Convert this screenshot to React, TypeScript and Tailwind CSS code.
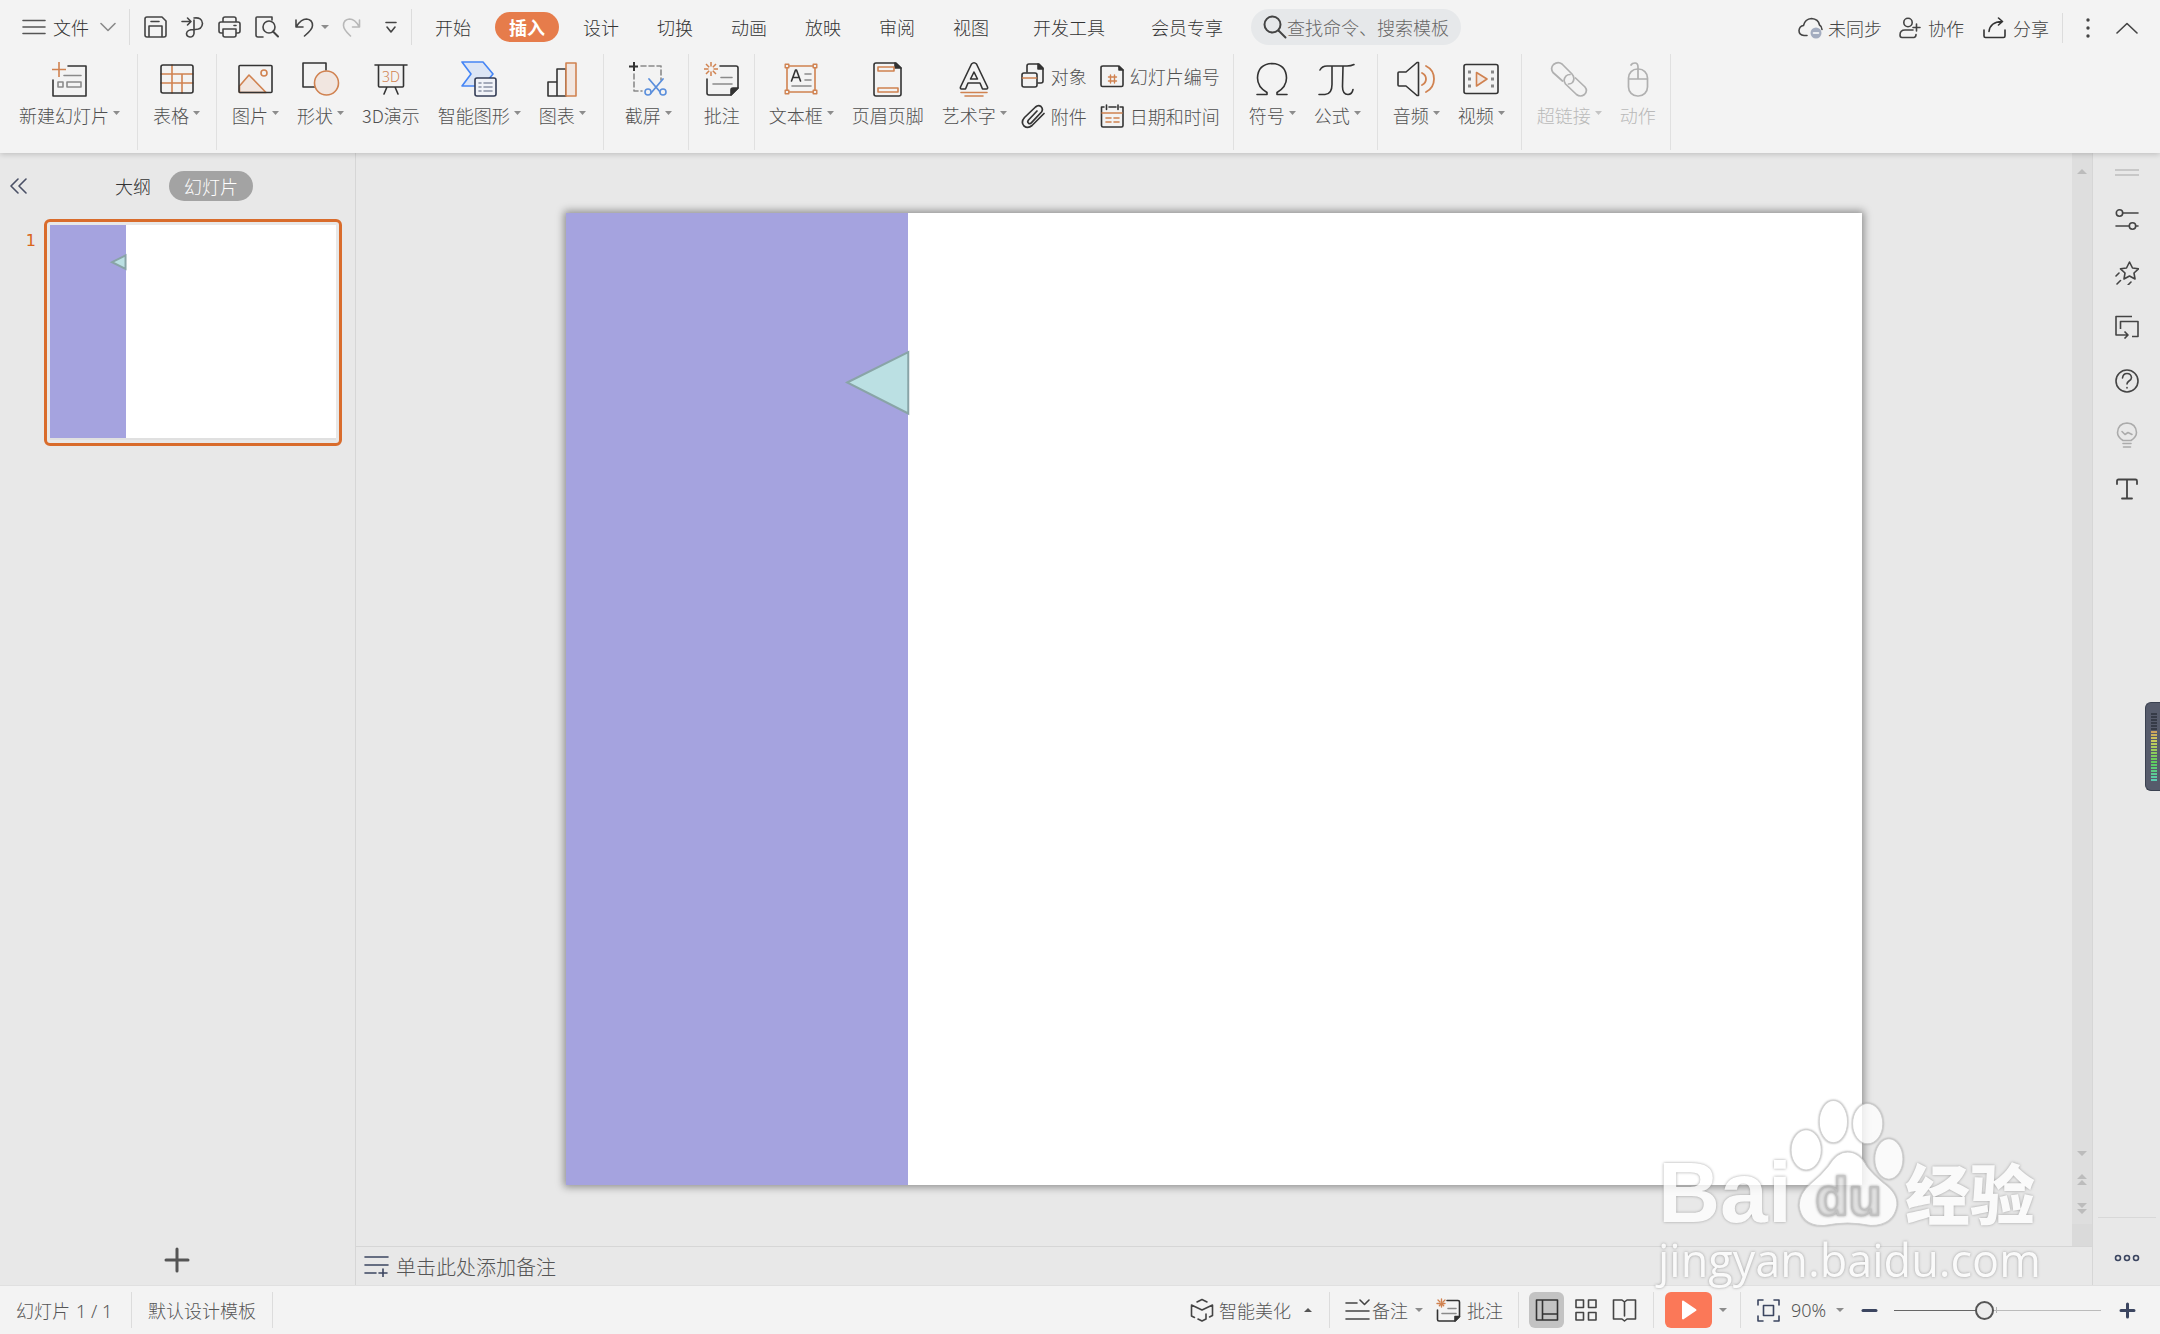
import React from "react";

type IconProps = { w: number; h: number; color?: string; sw?: number; children: React.ReactNode };

const Icon = ({ w, h, color = "#333333", sw = 1.6, children }: IconProps) => (
  <svg width={w} height={h} viewBox={`0 0 ${w} ${h}`} fill="none" stroke={color} strokeWidth={sw} strokeLinejoin="round" strokeLinecap="round" className="shrink-0" aria-hidden="true">
    {children}
  </svg>
);

const OR = "#d08250";
const ORF = "#f1e6e0";

const Caret = ({ color = "#8c8c8c" }: { color?: string }) => (
  <svg width="7" height="10" viewBox="0 0 7 10" className="shrink-0" aria-hidden="true">
    <path d="M0 1h7L3.5 5z" fill={color} />
  </svg>
);

const MidCaret = ({ up = false }: { up?: boolean }) => (
  <svg width="8" height="4" viewBox="0 0 8 4" className="shrink-0" aria-hidden="true">
    <path d={up ? "M0 4h8L4 0z" : "M0 0h8L4 4z"} fill={up ? "#555" : "#8c8c8c"} />
  </svg>
);

const icons = {
  newSlide: (
    <Icon w={35} h={36}>
      <path d="M16 5h18v30H1V19" />
      <path d="M7 1v15M0 8.500h14" stroke={OR} strokeLinecap="butt" />
      <path d="M12 14.500h17M6 21h5v5H6zM15 21h14v5H15z" stroke="#8a8a8a" />
    </Icon>
  ),
  table: (
    <Icon w={34} h={30}>
      <path d="M1 10h32M1 19h32M12 1v28M22 10v19" stroke={OR} />
      <rect x="1" y="1" width="32" height="28" rx="2" />
    </Icon>
  ),
  picture: (
    <Icon w={35} h={30}>
      <path d="M1.500 22L11 11l17 17.500H1.500z" fill={ORF} stroke={OR} />
      <circle cx="26" cy="9" r="3" stroke={OR} />
      <rect x="1" y="1.500" width="33" height="27" rx="1" />
    </Icon>
  ),
  shape: (
    <Icon w={38} h={36}>
      <path d="M24 9V2H1v24h12" />
      <circle cx="24.500" cy="22" r="12" fill={ORF} stroke={OR} />
    </Icon>
  ),
  demo3d: (
    <Icon w={34} h={34}>
      <path d="M1 3h32M4.500 3v21q0 1 1 1h23q1 0 1-1V3M13 25l-3 7M21 25l3 7" />
      <text x="17" y="20" textAnchor="middle" fontSize="14" fontFamily="Noto Sans" fill={OR} stroke="none">3D</text>
    </Icon>
  ),
  smart: (
    <Icon w={37} h={36}>
      <path d="M1 1h21l10 12-10 12H1l9-12z" fill="#dce5f5" stroke="#4585f5" />
      <rect x="14" y="17" width="21" height="18" rx="2" fill="#f1f3f8" stroke="#333c55" />
      <path d="M18 22h2M23 22h8M18 26h2M23 26h8M18 30h2M23 30h8" stroke="#8a92a5" />
    </Icon>
  ),
  chart: (
    <Icon w={30} h={36}>
      <path d="M1 21h9v14H1zM10 8h9v27h-9z" />
      <path d="M19 2h10v33H19z" fill={ORF} stroke={OR} />
    </Icon>
  ),
  capture: (
    <Icon w={38} h={36}>
      <path d="M12 5h20v14M5 13v17h8" stroke="#8a8a8a" strokeDasharray="5 3" />
      <path d="M5 1v9M0 5.500h9" strokeLinecap="butt" strokeWidth="2" />
      <path d="M20 18l12 14M34 18L22 32" stroke="#5b8fdc" strokeWidth="1.800" />
      <circle cx="19" cy="31" r="3" stroke="#5b8fdc" fill="#f3f3f3" />
      <circle cx="34" cy="31" r="3" stroke="#5b8fdc" fill="#f3f3f3" />
    </Icon>
  ),
  comment: (
    <Icon w={36} h={36}>
      <path d="M16 5h16q2 0 2 2v20l-7 7H5q-2 0-2-2V18" />
      <path d="M34 27v0l-7 7v-5q0-2 2-2z" fill="#333" />
      <path d="M7 1v4.500M7 10.500v4.500M0 8h4.500M9.500 8H14M2 3l3.200 3.200M8.800 9.800L12 13M12 3L8.800 6.200M5.200 9.800L2 13" stroke={OR} strokeWidth="1.500" strokeLinecap="butt" />
      <path d="M17 16.500h11M9 23h19" stroke="#8a8a8a" />
    </Icon>
  ),
  textbox: (
    <Icon w={34} h={32}>
      <path d="M3 3h28v26H3z" stroke={OR} />
      <path d="M1.200 1.200h3.600v3.600H1.200zM29.200 1.200h3.600v3.600h-3.600zM1.200 27.200h3.600v3.600H1.200zM29.200 27.200h3.600v3.600h-3.600z" fill="#f3f3f3" stroke={OR} strokeWidth="1.400" />
      <path d="M7.500 18l4-11h1l4 11M9 14.500h6" />
      <path d="M21 11h6M21 17h6M8 23h19" stroke="#8a8a8a" />
    </Icon>
  ),
  header: (
    <Icon w={30} h={36}>
      <path d="M3 2h20l5 5v26q0 2-2 2H3q-2 0-2-2V4q0-2 2-2z" />
      <path d="M22 2v5h6z" fill="#333" />
      <path d="M5 6h16v4H5zM5 27h20v4H5z" stroke={OR} />
    </Icon>
  ),
  wordart: (
    <Icon w={32} h={36}>
      <path d="M13.500 3q2.500-2.500 5 0l11 23q.5 2-1 2h-4l-2.500-6H10l-2.500 6h-4q-1.500 0-1-2zM16 11l-3.500 7h7z" />
      <path d="M3 31.500h26M7 35h18" stroke={OR} />
    </Icon>
  ),
  object: (
    <Icon w={24} h={26}>
      <path d="M6 9V3q0-2 2-2h10l4 4v13q0 2-2 2h-3" />
      <path d="M17 1l5 5h-5z" fill="#333" />
      <rect x="1" y="10" width="15" height="14" rx="2" fill="#f3f3f3" />
      <path d="M1.500 15h14" stroke={OR} />
    </Icon>
  ),
  attach: (
    <Icon w={24} h={26} sw={1.7}>
      <path d="M16 8L7.500 17q-1.500 2 0 3.200 1.500 1 3-.5L20.500 9q2-3-.5-5.500-2.700-2-5.500.5L3.500 14.500q-4 4.500-.5 8.500 4 3 8-.5L23 10.500" />
    </Icon>
  ),
  number: (
    <Icon w={24} h={24}>
      <path d="M3 2h15l5 4v15q0 1.500-1.500 1.500h-19Q1 22.500 1 21V3.500Q1 2 3 2z" />
      <path d="M19 2l4 4h-4z" fill="#333" />
      <path d="M10.500 11v8M14.500 11v8M8.500 13h8M8.500 17h8" stroke={OR} strokeWidth="1.400" />
    </Icon>
  ),
  date: (
    <Icon w={24} h={24}>
      <path d="M4 3H1.500v18.500q0 1.500 1.500 1.500h18.500q1.500 0 1.500-1.500V3h-3M9 3h7M6.500 1v4.500M18 1v4.500" />
      <path d="M2 9h20M6 14h5M14 14h5M6 18h5M14 18h5" stroke={OR} />
    </Icon>
  ),
  omega: (
    <Icon w={32} h={34}>
      <path d="M1 32.500h10v-2Q1.500 25 1.500 16 2 2 16 1.500 30 2 30.500 16q0 9-9.500 14.500v2h10" />
    </Icon>
  ),
  pi: (
    <Icon w={38} h={34}>
      <path d="M2 8q2-4 7-4h20q4 0 7-1.500M14 4.500v18q0 9.500-7 10H1M25 4.500l-.5 20q0 8 5.500 8 4 0 5-5" />
    </Icon>
  ),
  audio: (
    <Icon w={38} h={36}>
      <path d="M2 11h7L20 1.500h1.500v33H20L9 25H2q-1 0-1-1V12q0-1 1-1z" />
      <path d="M25 12q4 2 4 6t-4 6M29 5q8 4 8 13t-8 13" stroke={OR} strokeWidth="1.800" />
    </Icon>
  ),
  video: (
    <Icon w={36} h={32}>
      <rect x="1" y="1.500" width="34" height="29" rx="2" />
      <path d="M13.500 9.500L24 16l-10.500 7z" fill={ORF} stroke={OR} />
      <path d="M5 9h3M5 16h3M5 23h3M28 9h3M28 16h3M28 23h3" stroke="#888" strokeWidth="3" strokeLinecap="butt" />
    </Icon>
  ),
  link: (
    <Icon w={38} h={36} color="#b0b0b0" sw={1.7}>
      <path d="M12.500 20L3 11.500Q0 7 3.500 3.500 8 0 12 3l10 10q3.500 4 .5 8.500-1.500 1.500-4 1.500" />
      <path d="M25.500 17L35 26q3 4-.5 7.500-4 3-8 0L15.500 23q-3-4 .5-8 1.500-1.500 4-1.500" />
    </Icon>
  ),
  mouse: (
    <Icon w={24} h={36} color="#b0b0b0" sw={1.7}>
      <rect x="2.500" y="8" width="19" height="27" rx="9" />
      <path d="M3 18h18M12 18V6q0-4-3-4-3 0-4 2" />
    </Icon>
  ),
};

type RibbonItem = { icon: React.ReactNode; label: string; caret?: boolean; off?: boolean };

const RibbonButton = ({ icon, label, caret, off }: RibbonItem) => (
  <button type="button" disabled={off} className={`flex shrink-0 flex-col items-center px-[9px] ${off ? "text-[#b9b9b9]" : "text-[#505050]"}`}>
    <span className="flex h-9 items-center">{icon}</span>
    <span className="mt-1 flex h-7 items-center gap-1 text-lg leading-7 whitespace-nowrap">
      {label}
      {caret && <Caret color={off ? "#c4c4c4" : "#8c8c8c"} />}
    </span>
  </button>
);

const Group = ({ items, pad = "pl-[6px] pr-[7px]", children }: { items: RibbonItem[]; pad?: string; children?: React.ReactNode }) => (
  <div className={`flex h-24 shrink-0 items-start border-r border-[#e0e0e0] pt-[7px] ${pad}`}>
    {items.map((it) => (
      <RibbonButton key={it.label} {...it} />
    ))}
    {children}
  </div>
);

const SmallButton = ({ icon, label }: { icon: React.ReactNode; label: string }) => (
  <button type="button" className="flex h-10 items-center gap-[6px] text-lg whitespace-nowrap text-[#505050]">
    {icon}
    {label}
  </button>
);

const Tool = ({ label, className, children }: { label: string; className?: string; children: React.ReactNode }) => (
  <button type="button" aria-label={label} className={`flex shrink-0 items-center justify-center ${className ?? ""}`}>
    {children}
  </button>
);

const TopBar = () => (
  <div className="flex h-[54px] items-center pr-[22px] pl-[22px] text-lg whitespace-nowrap text-[#333]">
    <button type="button" className="flex items-center">
      <Icon w={24} h={16} color="#555">
        <path d="M1 1.500h22M1 8h22M1 14.500h22" />
      </Icon>
      <span className="ml-[7px]">文件</span>
      <span className="ml-[11px]">
        <Icon w={16} h={10} color="#8a8a8a"><path d="M1 1.500l7 7 7-7" /></Icon>
      </span>
    </button>
    <span className="ml-[13px] h-9 w-px bg-[#dcdcdc]" />
    <div className="ml-[14px] flex items-center gap-[14px]">
      <Tool label="保存">
        <Icon w={23} h={22} color="#444">
          <path d="M3 1h15l4 4v14q0 2-2 2H3q-2 0-2-2V3q0-2 2-2zM5 21v-11h13v11M7 5.500h8" />
        </Icon>
      </Tool>
      <Tool label="输出为PDF">
        <Icon w={23} h={22} color="#444">
          <path d="M1 5.500h8M6.500 2l3.500 3.500L6.500 9M13 2q8-1 8.500 5.500Q21 14 13 13.500V4M13 13.500v4q-.5 3.500-4 3.500-3.500-.5-3.500-3.500.5-4 7.500-4" />
        </Icon>
      </Tool>
      <Tool label="打印">
        <Icon w={23} h={22} color="#444">
          <path d="M5 6V3q0-2 2-2h9q2 0 2 2v3M5 17H3q-2 0-2-2V8q0-2 2-2h17q2 0 2 2v7q0 2-2 2h-2M5 13h13v6q0 2-2 2H7q-2 0-2-2zM16 9.500h2" />
        </Icon>
      </Tool>
      <Tool label="打印预览">
        <Icon w={24} h={22} color="#444">
          <path d="M17 4V1H2Q1 1 1 2v17q0 2 2 2h5" />
          <circle cx="14" cy="11" r="6" />
          <path d="M18 15.500l5 5" strokeWidth="2" />
        </Icon>
      </Tool>
    </div>
    <div className="ml-[15px] flex items-center">
      <Tool label="撤销">
        <Icon w={20} h={20} color="#444"><path d="M2 3v7h7M2.500 9.500Q7 2 12.500 2q6 .5 6 6.500 0 4-8 10.500" /></Icon>
      </Tool>
      <Tool label="撤销列表" className="ml-[7px]"><MidCaret /></Tool>
      <Tool label="恢复" className="ml-[13px]">
        <Icon w={19} h={20} color="#b8b8b8"><path d="M17.500 3v7h-7M17 9.500Q13 2 7.500 2 1.500 2.500 1.500 8.500q0 4 7 10.500" /></Icon>
      </Tool>
      <Tool label="自定义快速访问工具栏" className="ml-6">
        <Icon w={12} h={13} color="#444"><path d="M1 1.500h10M2 6l4 5 4-5" /></Icon>
      </Tool>
    </div>
    <span className="ml-[14px] h-9 w-px bg-[#dcdcdc]" />
    <nav className="ml-[9px] flex items-center gap-[10px]">
      {["开始", "插入", "设计", "切换", "动画", "放映", "审阅", "视图"].map((t) => (
        <button key={t} type="button" className={t === "插入" ? "h-[30px] w-16 rounded-full bg-[#e67c4b] font-bold text-white" : "h-[30px] w-16"}>
          {t}
        </button>
      ))}
      <button type="button" className="ml-4 h-[30px] px-1">开发工具</button>
      <button type="button" className="ml-7 h-[30px] px-1">会员专享</button>
    </nav>
    <label className="ml-6 flex h-9 w-[210px] shrink-0 items-center rounded-full bg-[#e6e8ea] pl-3">
      <Icon w={24} h={24} color="#444" sw={2}>
        <circle cx="9.500" cy="9.500" r="8" />
        <path d="M15.500 15.500l7 7" />
      </Icon>
      <input aria-label="查找命令、搜索模板" placeholder="查找命令、搜索模板" className="min-w-0 flex-1 bg-transparent outline-none placeholder:text-[#666]" />
    </label>
    <div className="ml-auto flex items-center pt-px text-[#444]">
      <button type="button" className="flex items-center gap-[5px]">
        <Icon w={25} h={22} color="#444">
          <path d="M9 18.500H6Q1 18 1 13.500 1.500 9 5.500 8.500 7 2 13.500 1.500q7 .5 8 6.500 2.500 1.500 2.500 4.500" />
          <circle cx="18" cy="16" r="5.500" fill="#a3acbf" stroke="none" />
          <path d="M15.500 16h5" stroke="#fff" />
        </Icon>
        未同步
      </button>
      <button type="button" className="ml-[17px] flex items-center gap-[7px]">
        <Icon w={22} h={22} color="#444">
          <circle cx="9" cy="5.500" r="4.200" />
          <path d="M14 13H6q-5 0-5 5 0 2.500 2 2.500h12q2-.5 2-3M14 10.500h7M17.500 7v7" />
        </Icon>
        协作
      </button>
      <button type="button" className="ml-[19px] flex items-center gap-[7px]">
        <Icon w={23} h={22} color="#333">
          <path d="M1 13v6q0 1.500 1.500 1.500h18q1.500 0 1.500-1.500v-6M6 14.500Q7 5 19 4.500M15.500 1l4 3.500-4 3.500" />
        </Icon>
        分享
      </button>
      <span className="ml-[13px] h-[30px] w-px bg-[#dcdcdc]" />
      <Tool label="更多" className="ml-[23px]">
        <svg width="4" height="20" viewBox="0 0 4 20" fill="#444" aria-hidden="true"><circle cx="2" cy="2" r="1.700" /><circle cx="2" cy="10" r="1.700" /><circle cx="2" cy="18" r="1.700" /></svg>
      </Tool>
      <Tool label="收起功能区" className="ml-[26px]">
        <Icon w={22} h={12} color="#444"><path d="M1 11L11 1.500 21 11" /></Icon>
      </Tool>
    </div>
  </div>
);

const Ribbon = () => (
  <div className="flex h-[99px] items-start overflow-hidden">
    <Group pad="pl-[10px] pr-2" items={[{ icon: icons.newSlide, label: "新建幻灯片", caret: true }]} />
    <Group items={[{ icon: icons.table, label: "表格", caret: true }]} />
    <Group
      pad="pl-[6px] pr-2"
      items={[
        { icon: icons.picture, label: "图片", caret: true },
        { icon: icons.shape, label: "形状", caret: true },
        { icon: icons.demo3d, label: "3D演示" },
        { icon: icons.smart, label: "智能图形", caret: true },
        { icon: icons.chart, label: "图表", caret: true },
      ]}
    />
    <Group pad="pl-3 pr-[7px]" items={[{ icon: icons.capture, label: "截屏", caret: true }]} />
    <Group pad="pl-[6px] pr-[5px]" items={[{ icon: icons.comment, label: "批注" }]} />
    <Group
      pad="pl-[5px] pr-[7px]"
      items={[
        { icon: icons.textbox, label: "文本框", caret: true },
        { icon: icons.header, label: "页眉页脚" },
        { icon: icons.wordart, label: "艺术字", caret: true },
      ]}
    >
      <div className="-mt-[5px] grid grid-cols-[auto_auto] gap-x-[13px] pr-[6px] pl-[5px]">
        <SmallButton icon={icons.object} label="对象" />
        <SmallButton icon={icons.number} label="幻灯片编号" />
        <SmallButton icon={icons.attach} label="附件" />
        <SmallButton icon={icons.date} label="日期和时间" />
      </div>
    </Group>
    <Group items={[{ icon: icons.omega, label: "符号", caret: true }, { icon: icons.pi, label: "公式", caret: true }]} />
    <Group items={[{ icon: icons.audio, label: "音频", caret: true }, { icon: icons.video, label: "视频", caret: true }]} />
    <Group pad="pl-[6px] pr-[5px]" items={[{ icon: icons.link, label: "超链接", caret: true, off: true }, { icon: icons.mouse, label: "动作", off: true }]} />
  </div>
);

const SlideArt = () => (
  <div className="relative size-full bg-white">
    <div className="h-full w-[26.4%] bg-[#a5a3df]" />
    <svg viewBox="0 0 1295 972" preserveAspectRatio="none" className="absolute inset-0 size-full" aria-hidden="true">
      <path d="M281 169.500L342 139v61.500z" fill="#bbe0e3" stroke="#89a4a7" strokeWidth="2" vectorEffect="non-scaling-stroke" />
    </svg>
  </div>
);

const Sidebar = () => (
  <aside className="flex w-[356px] shrink-0 flex-col border-r border-[#d6d6d6] pt-[18px]">
    <div className="flex h-[30px] items-center pl-[9px] text-lg text-[#333]">
      <Tool label="收起面板">
        <Icon w={19} h={16} color="#4a5066"><path d="M9 1L2 8l7 7M17 1l-7 7 7 7" /></Icon>
      </Tool>
      <button type="button" className="ml-[87px]">大纲</button>
      <button type="button" className="ml-[18px] h-[30px] w-[84px] rounded-full bg-[#a3a3a3] text-white">幻灯片</button>
    </div>
    <div className="mt-[18px] flex pr-[13px]">
      <span className="w-11 pt-[10px] pr-2 text-right font-['DejaVu_Sans',sans-serif] text-base font-normal text-[#d9651b]">1</span>
      <button type="button" aria-label="幻灯片 1" className="flex-1 rounded-md border-3 border-[#d96c2c] p-[3px]">
        <div className="aspect-[286/215] w-full border-b-2 border-[#e0e0e0]"><SlideArt /></div>
      </button>
    </div>
    <div className="mt-auto flex justify-center pr-[2px] pb-[12px]">
      <Tool label="新建幻灯片">
        <Icon w={26} h={26} color="#555" sw={3}><path d="M13 2v22M2 13h22" /></Icon>
      </Tool>
    </div>
  </aside>
);

const ScrollBar = () => (
  <div className="flex w-[21px] shrink-0 flex-col items-center border-r border-[#d6d6d6] bg-[#dedede] pt-4">
    <svg width="10" height="5" viewBox="0 0 10 5" aria-hidden="true"><path d="M0 5h10L5 0z" fill="#bcbcbc" /></svg>
    <div className="flex-1" />
    <svg width="10" height="64" viewBox="0 0 10 64" fill="#bcbcbc" aria-hidden="true">
      <path d="M0 0h10L5 5zM0 28h10L5 23zM0 34h10L5 29zM0 52h10L5 57zM0 58h10L5 63z" />
    </svg>
    <div className="mt-[9px] h-[22px] w-full bg-[#dadada]" />
  </div>
);

const Rail = () => (
  <aside className="relative flex w-[67px] shrink-0 flex-col items-center pt-4">
    <Icon w={24} h={7} color="#bdbdbd"><path d="M0 1h24M0 6h24" /></Icon>
    <div className="mt-4 flex flex-col">
      <Tool label="属性" className="h-[54px]">
        <Icon w={24} h={22} color="#444">
          <path d="M8 5h15M1 18h13M21 18h2" /><circle cx="4.500" cy="5" r="3.200" /><circle cx="17.500" cy="18" r="3.200" />
        </Icon>
      </Tool>
      <Tool label="动画效果" className="h-[54px]">
        <Icon w={24} h={24} color="#444">
          <path d="M14.500 1l3 6 6 .8-4.500 4.200 1 6-5.500-3-5.500 3 1-6L5.500 7.800l6-.8zM1 15l3-3M2 23l3.500-3.500M13 24l3-3" />
        </Icon>
      </Tool>
      <Tool label="切换效果" className="h-[54px]">
        <Icon w={24} h={24} color="#444">
          <path d="M17 1.500H1V20h12M9.500 16.500L13 20l-3.500 3.500M5.500 14V6.500H23v15h-6" strokeLinecap="butt" />
        </Icon>
      </Tool>
      <Tool label="帮助" className="h-[54px]">
        <Icon w={24} h={24} color="#444">
          <circle cx="12" cy="12" r="11" />
          <path d="M7.500 9Q8 4.500 12 4.500T16.500 8.500q0 2-2.500 3.500-2 1.500-2 3M12 18.500v.5" />
        </Icon>
      </Tool>
      <Tool label="提示" className="h-[54px]">
        <Icon w={24} h={26} color="#ababab">
          <path d="M8 18.500Q2.500 15 2.500 10.500 3 1.500 12 1 21 1.500 21.500 10.500 21.500 15 16 18.500zM8 21.500h8M8.500 25h7M7 9.500l3 3 3-2 4 2" />
        </Icon>
      </Tool>
      <Tool label="文字" className="h-[54px]">
        <Icon w={24} h={22} color="#444" sw={1.8}><path d="M2 6V3q0-1.500 1.500-1.500h17Q22 1.500 22 3v3M12 1.500v19M7 20.500h10" /></Icon>
      </Tool>
    </div>
    <div className="mt-auto flex h-[68px] flex-col items-center border-t border-[#d8d8d8]">
      <Tool label="更多工具" className="mt-9 w-[58px]">
        <Icon w={26} h={8} color="#3b4560"><circle cx="4" cy="4" r="2.500" /><circle cx="13" cy="4" r="2.500" /><circle cx="22" cy="4" r="2.500" /></Icon>
      </Tool>
    </div>
    <div className="absolute top-[549px] right-0 flex h-[89px] w-[15px] flex-col justify-center gap-px rounded-l-md border border-r-0 border-[#3a4150] bg-[#565b6b] pr-[3px] pl-[5px]">
      {Array.from({ length: 23 }, (_, i) => (
        <span key={i} className="h-[2px] w-full" style={{ backgroundColor: i < 6 ? "#363b47" : `hsl(${38 + (i - 6) * 8}, 52%, 58%)` }} />
      ))}
    </div>
  </aside>
);

const StatusBar = () => (
  <footer className="flex h-[49px] shrink-0 items-center border-t border-[#e0e0e0] bg-[#f3f3f3] pr-6 pl-4 text-lg whitespace-nowrap text-[#555]">
    <span className="w-[115px]">幻灯片<span className="ml-[6px] font-['Noto_Sans',sans-serif]">1 / 1</span></span>
    <span className="h-9 w-px bg-[#dcdcdc]" />
    <span className="ml-4">默认设计模板</span>
    <span className="ml-4 h-9 w-px bg-[#dcdcdc]" />
    <button type="button" className="ml-auto flex items-center">
      <Icon w={24} h={24} color="#444">
        <path d="M7 4l5-2.500L17 4M1.500 7v11l3 1.500M1.500 7l10.500 5 10.500-5v10.500l-3 1.500M8 21l4 2 4-2v-5" />
      </Icon>
      <span className="mr-[13px] ml-[5px]">智能美化</span>
      <MidCaret up />
    </button>
    <span className="ml-[17px] h-9 w-px bg-[#dcdcdc]" />
    <button type="button" className="ml-[15px] flex items-center">
      <Icon w={25} h={22} color="#444"><path d="M1 4h11M15 1l4.500 4.500L24 1M1 12h23M1 20h23" /></Icon>
      <span className="mr-[7px] ml-[2px]">备注</span>
      <MidCaret />
    </button>
    <button type="button" className="ml-[13px] flex items-center gap-[6px]">
      <Icon w={25} h={24} color="#333">
        <path d="M11 2.500h11q1.500 0 1.500 1.500v14.500L19 23H3q-1.500 0-1.500-1.500V12" />
        <path d="M23.500 18.500L19 23v-4.500z" fill="#333" />
        <path d="M5.500 1v9M1 5.500h9M2 2l7 7M9 2L2 9" stroke={OR} strokeWidth="1.400" strokeDasharray="3 2" />
        <path d="M12 10.500h8M6 15.500h14" stroke="#8a8a8a" />
      </Icon>
      批注
    </button>
    <span className="ml-[15px] h-9 w-px bg-[#dcdcdc]" />
    <Tool label="普通视图" className="ml-[10px] h-9 w-[35px] rounded-md bg-[#c3c3c3]">
      <Icon w={24} h={24}><path d="M1.500 2h21v20h-21zM7.500 2v20M7.500 16h15" /></Icon>
    </Tool>
    <Tool label="幻灯片浏览" className="ml-[10px]">
      <Icon w={24} h={24} color="#444"><path d="M2 2h7.500v7.500H2zM14.500 2H22v7.500h-7.500zM2 14.500h7.500V22H2zM14.500 14.500H22V22h-7.500z" /></Icon>
    </Tool>
    <Tool label="阅读视图" className="ml-[14px]">
      <Icon w={25} h={24} color="#444"><path d="M12.500 4L10 2H1.500v19H10l2.500 2 2.500-2h8.500V2H15zM12.500 4v14" /></Icon>
    </Tool>
    <span className="ml-4 h-9 w-px bg-[#dcdcdc]" />
    <Tool label="从当前幻灯片开始播放" className="ml-[11px] h-9 w-[47px] rounded-md bg-[#fb7858]">
      <svg width="16" height="20" viewBox="0 0 16 20" aria-hidden="true"><path d="M2 1.500L14.500 10 2 18.500z" fill="#fff" stroke="#fff" strokeWidth="2" strokeLinejoin="round" /></svg>
    </Tool>
    <Tool label="播放选项" className="ml-[7px]"><MidCaret /></Tool>
    <span className="ml-[13px] h-9 w-px bg-[#dcdcdc]" />
    <Tool label="最佳显示比例" className="ml-4">
      <Icon w={23} h={23} color="#3b4560"><path d="M1 6V1h5M17 1h5v5M22 17v5h-5M6 22H1v-5M6.500 6.500h10v10h-10z" /></Icon>
    </Tool>
    <button type="button" className="ml-[11px] flex w-[53px] items-center justify-between"><span className="font-['Noto_Sans',sans-serif]">90%</span><MidCaret /></button>
    <Tool label="缩小" className="ml-[17px]">
      <Icon w={17} h={17} color="#3b4560" sw={3}><path d="M2 8.500h13" /></Icon>
    </Tool>
    <div className="relative ml-4 flex w-[207px] items-center">
      <span className="absolute left-[102px] h-[6px] w-px bg-[#b5b5b5]" />
      <input
        type="range"
        min={0}
        max={100}
        defaultValue={43}
        aria-label="显示比例"
        className="relative h-5 w-full appearance-none bg-transparent [&::-webkit-slider-runnable-track]:h-px [&::-webkit-slider-runnable-track]:bg-[linear-gradient(to_right,#666_0_43%,#bbb_43%)] [&::-webkit-slider-thumb]:-mt-[9px] [&::-webkit-slider-thumb]:size-[19px] [&::-webkit-slider-thumb]:appearance-none [&::-webkit-slider-thumb]:rounded-full [&::-webkit-slider-thumb]:border-2 [&::-webkit-slider-thumb]:border-[#555] [&::-webkit-slider-thumb]:bg-[#ececec]"
      />
    </div>
    <Tool label="放大" className="ml-[18px]">
      <Icon w={17} h={17} color="#3b4560" sw={3}><path d="M2 8.500h13M8.500 2v13" /></Icon>
    </Tool>
  </footer>
);

const Watermark = () => (
  <div className="pointer-events-none absolute right-[114px] bottom-[38px] w-[388px] font-['Open_Sans',sans-serif] text-white opacity-80 [text-shadow:0_0_3px_#888]">
    <div className="flex h-[134px] items-end">
      <span className="w-[130px] font-['Liberation_Sans',sans-serif] text-[86px] leading-[72px] font-bold">Bai</span>
      <svg width="117" height="134" viewBox="0 0 116 132" className="shrink-0 drop-shadow-[0_0_1px_#888]" fill="#fff" stroke="#c8c8c8" aria-hidden="true">
        <ellipse cx="18" cy="55" rx="15" ry="20" />
        <ellipse cx="45" cy="27" rx="14" ry="21" />
        <ellipse cx="79" cy="29" rx="15" ry="20" />
        <ellipse cx="100" cy="64" rx="14" ry="20" />
        <path d="M59 57q12 0 19 14 6 8 17 17 14 10 13 22-3 20-26 20-23-5-46 0-23 1-25-20 0-12 12-22 10-8 17-17 8-14 19-14z" />
        <text x="60" y="120" textAnchor="middle" fontSize="54" fontFamily="Liberation Sans" fontWeight="700" fill="#e2e2e2" stroke="#b8b8b8" strokeWidth="1.500">du</text>
      </svg>
      <span className="font-['Noto_Sans_CJK_SC',sans-serif] text-[65px] leading-[74px] font-black">经验</span>
    </div>
    <div className="h-[68px] text-[45px] leading-[64px] font-medium">jingyan.baidu.com</div>
  </div>
);

export default function App() {
  return (
    <div className="relative flex h-screen flex-col overflow-hidden bg-[#e8e8e8] font-['Noto_Sans_CJK_SC',sans-serif] font-light">
      <header className="z-10 shrink-0 bg-[#f3f3f3] shadow-[0_1px_6px_rgba(0,0,0,0.2)]">
        <TopBar />
        <Ribbon />
      </header>
      <div className="flex min-h-0 flex-1">
        <Sidebar />
        <main className="flex min-w-0 flex-1 flex-col">
          <div className="flex min-h-0 flex-1">
            <div className="flex min-w-0 flex-1 items-center justify-center pt-[60px] pb-[61px]">
              <div className="aspect-[4/3] h-full shadow-[0_0_8px_2px_rgba(0,0,0,0.4)]"><SlideArt /></div>
            </div>
            <ScrollBar />
          </div>
          <div className="flex h-[39px] shrink-0 items-center gap-[7px] border-t border-r border-[#d6d6d6] pl-2">
            <Icon w={25} h={22} color="#3b4560">
              <path d="M1 2h23M1 10h23M1 18h11M15 18h8M19 14v8" />
            </Icon>
            <input aria-label="备注" placeholder="单击此处添加备注" className="flex-1 bg-transparent pt-[2px] text-xl outline-none placeholder:text-[#555]" />
          </div>
        </main>
        <Rail />
      </div>
      <StatusBar />
      <Watermark />
    </div>
  );
}
